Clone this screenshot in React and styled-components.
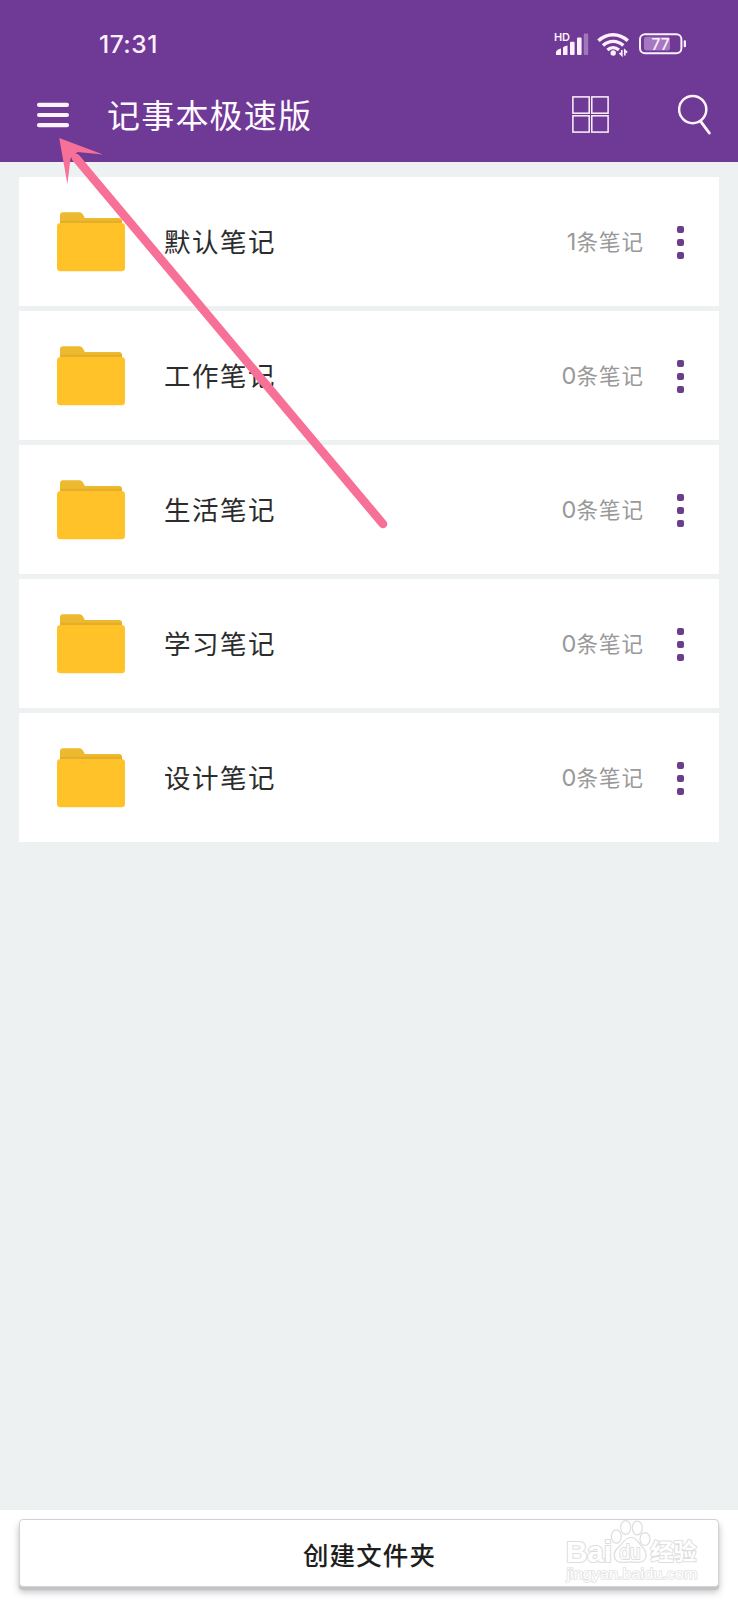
import React from 'react';
import styled, { createGlobalStyle } from 'styled-components';

const GlobalStyle = createGlobalStyle`
  * {
    box-sizing: border-box;
  }

  body {
    margin: 0;
    background-color: #edf1f2;
    font-family: 'Noto Sans CJK SC', 'Noto Sans', sans-serif;
  }
`;

const Screen = styled.div`
  position: relative;
  display: flex;
  flex-direction: column;
  width: 738px;
  height: 1600px;
  overflow: hidden;
  background-color: #edf1f2;
`;

const Header = styled.header`
  height: 162px;
  background-color: #6f3996;
  color: #fdeffc;
`;

const StatusBar = styled.div`
  display: flex;
  align-items: center;
  justify-content: space-between;
  height: 88px;
  padding: 0 51px 0 99px;
`;

const Clock = styled.span`
  font-family: Inter, sans-serif;
  font-size: 24.5px;
  font-weight: 540;
  line-height: 30px;
  letter-spacing: 0.5px;
`;

const StatusIcons = styled.svg`
  display: block;
`;

const Toolbar = styled.div`
  display: flex;
  align-items: center;
  height: 52px;
  padding: 0 26px 0 37px;
`;

const IconButton = styled.button`
  display: flex;
  padding: ${({ $drop }) => $drop || 0}px 0 0;
  border: none;
  background: none;
  color: #fdf3fc;
  margin-left: ${({ $gap }) => $gap || 0}px;
`;

const AppTitle = styled.h1`
  flex: 1;
  margin: 0 0 0 38px;
  color: #fffaff;
  font-size: 33px;
  font-weight: 400;
  line-height: 49px;
  letter-spacing: 1.2px;
`;

const FolderList = styled.ul`
  display: flex;
  flex: 1;
  flex-direction: column;
  gap: 5px;
  margin: 0;
  padding: 15px 19px 0;
  list-style: none;
`;

const FolderRow = styled.li`
  display: flex;
  align-items: center;
  height: 129px;
  padding: 0 35px 0 38px;
  background-color: #fff;
`;

const FolderName = styled.span`
  flex: 1;
  margin-left: 39px;
  padding-bottom: 2px;
  color: #2c2c2c;
  font-size: 26.5px;
  line-height: 38px;
  letter-spacing: 1.5px;
`;

const NoteCount = styled.span`
  color: #999;
  font-size: 21.5px;
  font-weight: 400;
  line-height: 32px;
  letter-spacing: 1.1px;
`;

const CountNumber = styled.span`
  font-family: Inter, sans-serif;
  font-size: 23.5px;
  font-weight: 400;
  letter-spacing: 0;
`;

const MoreButton = styled.button`
  display: flex;
  flex-direction: column;
  gap: 6.5px;
  margin-left: 33px;
  padding: 2px 0 0;
  border: none;
  background: none;
`;

const Dot = styled.span`
  width: 6.8px;
  height: 6.8px;
  border-radius: 2px;
  background-color: #6b3e8b;
`;

const BottomBar = styled.footer`
  height: 90px;
  padding: 9px 19px 0;
  background-color: #fff;
`;

const CreateButton = styled.button`
  display: block;
  width: 100%;
  height: 68px;
  padding: 1px 0 0 1px;
  border: 1px solid #d3d3d5;
  border-radius: 4px;
  background-color: #fff;
  box-shadow: 0 3px 1px #c3c3c6, 0 5px 7px rgba(60, 60, 70, 0.32);
  color: #1e1e1e;
  font-family: inherit;
  font-size: 25.5px;
  font-weight: 500;
  letter-spacing: 1.1px;
`;

const PointerArrow = styled.svg`
  position: absolute;
  top: 130px;
  left: 50px;
`;

const Watermark = styled.svg`
  position: absolute;
  top: 1516px;
  left: 560px;

  text {
    paint-order: stroke;
    stroke-linejoin: round;
  }
`;

const folders = [
  { name: '默认笔记', count: 1 },
  { name: '工作笔记', count: 0 },
  { name: '生活笔记', count: 0 },
  { name: '学习笔记', count: 0 },
  { name: '设计笔记', count: 0 },
];

const StatusIndicators = () => (
  <StatusIcons width="137" height="28" viewBox="550 30 137 28" fill="none">
    <text
      x="554"
      y="41.4"
      fill="#fdeffc"
      fontFamily="Inter, sans-serif"
      fontSize="11"
      fontWeight="600"
      textLength="16"
    >
      HD
    </text>
    <g fill="#fdeffc">
      <path d="M556 55V52Q557 49 561 48.5V55Z" />
      <path d="M563 55V47.5Q564 46 567.5 45.5V55Z" />
      <rect x="570" y="41.8" width="4.6" height="13.2" rx="1" />
      <rect x="577" y="37.4" width="4.6" height="17.6" rx="1" />
      <rect x="583.8" y="33.4" width="4.4" height="21.6" rx="1" opacity="0.35" />
    </g>
    <g stroke="#fdeffc" strokeWidth="3.4">
      <path d="M598.4 40.8C606.8 32.7 619.2 32.7 627.8 40.8" />
      <path d="M603 45.6C609 40 617.4 40 623.3 45.6" />
      <path d="M607.4 50C610.8 47 615.4 47 618.9 50" />
    </g>
    <circle cx="613.2" cy="53" r="2.7" fill="#fdeffc" />
    <path
      d="M621.8 50V55.2L619.5 52.9M624.8 55.6V50.4L627.1 52.7"
      stroke="#fdeffc"
      strokeWidth="1.7"
    />
    <rect x="640" y="34.3" width="41.4" height="18.9" rx="5" stroke="#fdeffc" strokeWidth="2" />
    <rect x="644" y="36.8" width="26" height="13.6" rx="2.5" fill="#a678c2" />
    <rect x="683.7" y="40.3" width="2.3" height="7" rx="1" fill="#fdeffc" />
    <text
      x="651.5"
      y="49.6"
      fill="#fdeffc"
      fontFamily="Inter, sans-serif"
      fontSize="15.5"
      fontWeight="500"
      textLength="18"
    >
      77
    </text>
  </StatusIcons>
);

const MenuIcon = () => (
  <svg width="32" height="26" viewBox="0 0 32 26" fill="currentColor">
    <rect y="0.8" width="32" height="4.2" rx="2" />
    <rect y="10.9" width="32" height="4.2" rx="2" />
    <rect y="21" width="32" height="4.2" rx="2" />
  </svg>
);

const GridIcon = () => (
  <svg width="37" height="37" viewBox="0 0 37 37" fill="none" stroke="currentColor" strokeWidth="1.5">
    <rect x="0.9" y="0.9" width="16.3" height="16.3" />
    <rect x="19.8" y="0.9" width="16.3" height="16.3" />
    <rect x="0.9" y="19.8" width="16.3" height="16.3" />
    <rect x="19.8" y="19.8" width="16.3" height="16.3" />
  </svg>
);

const SearchIcon = () => (
  <svg width="34" height="41" viewBox="0 0 34 41" fill="none" stroke="currentColor" strokeLinecap="round">
    <circle cx="14.7" cy="15.6" r="13.6" strokeWidth="2.5" />
    <path d="M22.8 27.6L31.3 39" strokeWidth="2.9" />
  </svg>
);

const FolderIcon = () => (
  <svg width="68" height="60" viewBox="0 0 68 60">
    <path
      d="M3 14V3.2Q3 0.2 6 0.2H22.5Q24.7 0.2 26 2.5L27.8 5.9H62Q65 5.9 65 8.7V14Z"
      fill="#edb92f"
    />
    <path d="M3 8.7H65V14H3Z" fill="#e3ae2a" />
    <rect y="10.9" width="68" height="48.3" rx="3.5" fill="#ffc229" />
  </svg>
);

const App = () => {
  return (
    <>
      <GlobalStyle />
      <Screen>
        <Header>
          <StatusBar>
            <Clock>17:31</Clock>
            <StatusIndicators />
          </StatusBar>
          <Toolbar>
            <IconButton aria-label="菜单" $drop={2}>
              <MenuIcon />
            </IconButton>
            <AppTitle>记事本极速版</AppTitle>
            <IconButton aria-label="网格">
              <GridIcon />
            </IconButton>
            <IconButton aria-label="搜索" $gap={69}>
              <SearchIcon />
            </IconButton>
          </Toolbar>
        </Header>

        <FolderList>
          {folders.map(folder => (
            <FolderRow key={folder.name}>
              <FolderIcon />
              <FolderName>{folder.name}</FolderName>
              <NoteCount>
                <CountNumber>{folder.count}</CountNumber>条笔记
              </NoteCount>
              <MoreButton aria-label="更多">
                <Dot />
                <Dot />
                <Dot />
              </MoreButton>
            </FolderRow>
          ))}
        </FolderList>

        <BottomBar>
          <CreateButton>创建文件夹</CreateButton>
        </BottomBar>

        <PointerArrow width="345" height="405" viewBox="50 130 345 405">
          <path d="M76 158L383 524" stroke="#f77098" strokeWidth="8.6" strokeLinecap="round" />
          <path d="M59.2 138L103 154.5L77.5 152L70.5 158.5L67.4 184Z" fill="#f77098" />
        </PointerArrow>

        <Watermark width="145" height="72" viewBox="560 1516 145 72">
          <g fill="#fff" stroke="#dedede" strokeWidth="1.2">
            <text
              x="566"
              y="1561.5"
              strokeWidth="2.2"
              fontFamily="Liberation Sans, sans-serif"
              fontSize="30"
              fontWeight="700"
              textLength="46"
              lengthAdjust="spacingAndGlyphs"
            >
              Bai
            </text>
            <ellipse cx="616.3" cy="1536.5" rx="5" ry="6.6" />
            <ellipse cx="625.7" cy="1527.5" rx="5" ry="6.9" />
            <ellipse cx="637.3" cy="1528" rx="5" ry="6.9" />
            <ellipse cx="645" cy="1539" rx="5" ry="6.4" />
            <path d="M631 1537.5C636.5 1537.5 638 1542 641.5 1546C645 1549.5 646.5 1552 646 1556C645.5 1561.5 641.5 1562.5 637 1562.3C633 1561.8 629 1561.8 625 1562.3C619 1563 614.5 1561 614.2 1555.5C614 1551 616.5 1549 620 1545.5C623.5 1542 625.5 1537.5 631 1537.5Z" />
            <text
              x="619.5"
              y="1558.5"
              strokeWidth="2"
              fontFamily="Liberation Sans, sans-serif"
              fontSize="20"
              textLength="21"
              lengthAdjust="spacingAndGlyphs"
            >
              du
            </text>
            <text
              x="650.5"
              y="1559.5"
              strokeWidth="2"
              fontFamily="Noto Sans CJK SC, sans-serif"
              fontSize="23"
              fontWeight="700"
              textLength="46"
            >
              经验
            </text>
          </g>
          <text
            x="566.5"
            y="1579"
            fill="#fff"
            stroke="#e2e2e2"
            strokeWidth="1.6"
            fontFamily="Liberation Sans, sans-serif"
            fontSize="15.5"
            textLength="131"
            lengthAdjust="spacingAndGlyphs"
          >
            jingyan.baidu.com
          </text>
        </Watermark>
      </Screen>
    </>
  );
};

export default App;
